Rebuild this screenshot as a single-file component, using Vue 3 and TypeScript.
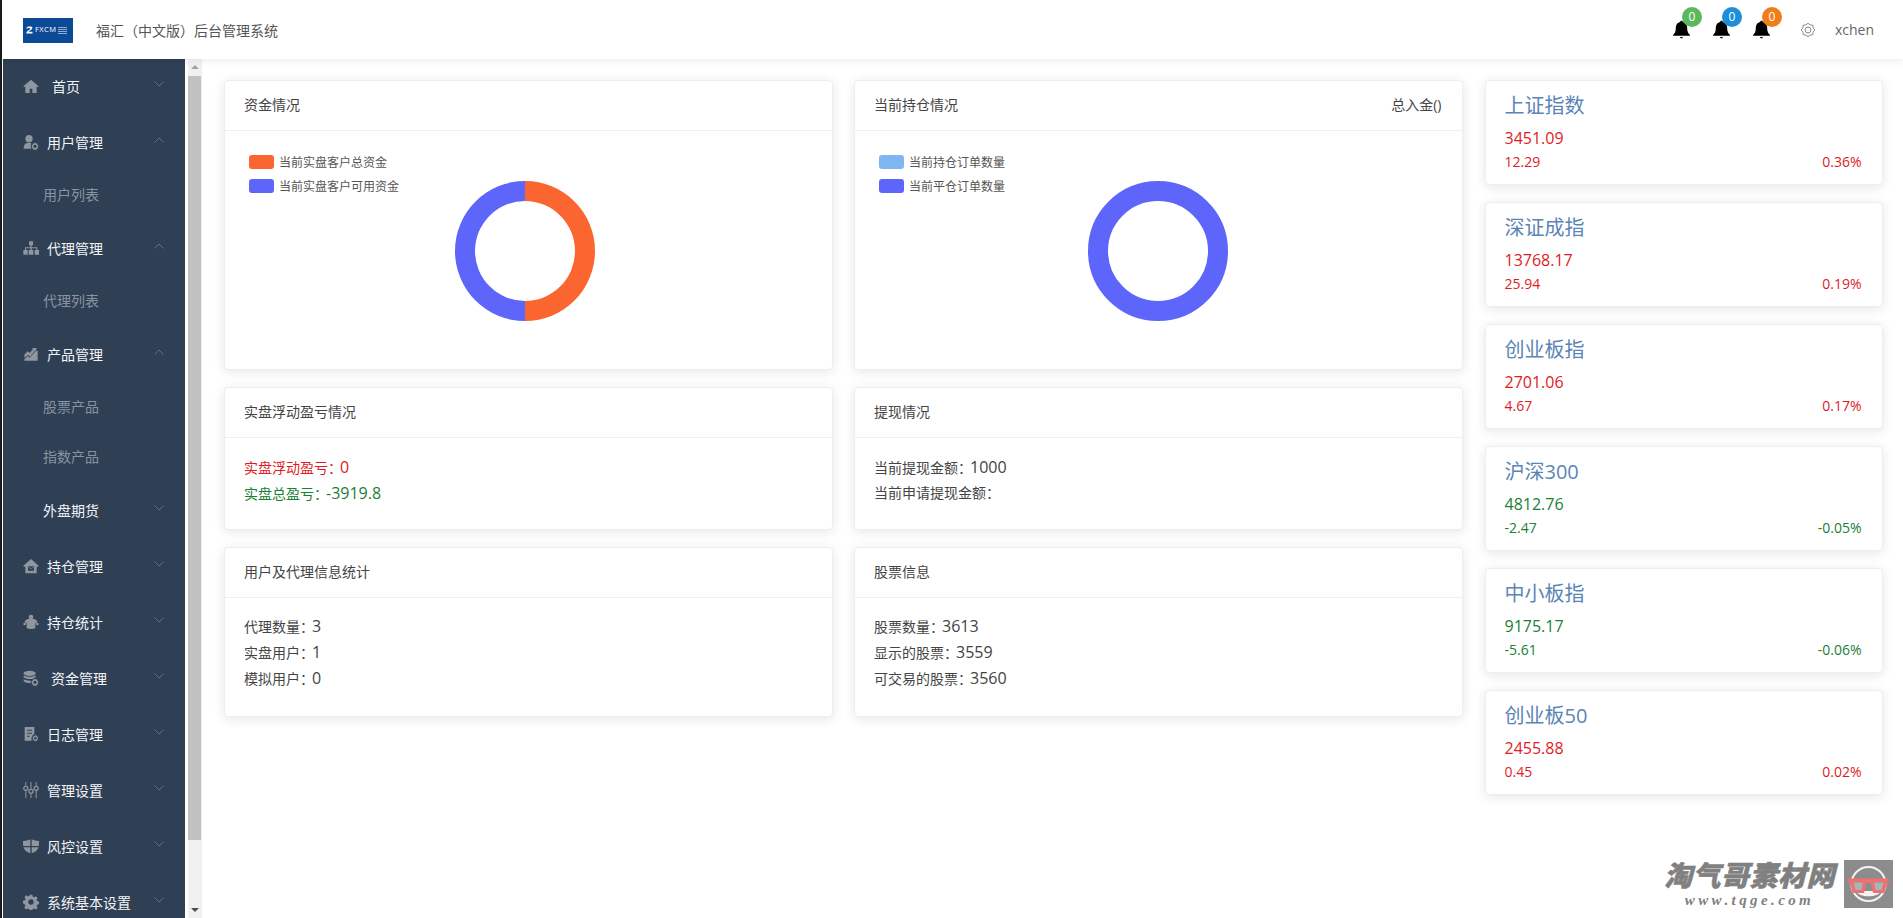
<template>
  <div class="page">
    <header class="topbar">
      <div class="logo">
        <svg class="logo-mark" viewBox="0 0 7 8" width="7" height="8">
          <path d="M.6 1.400C1.500.300 6.400-.200 6.400 2 6.400 3.600 3.600 4.300 2.500 5.800h4V7.600H.3C.3 4.800 4.200 3.800 4.200 2.500 4.200 1.700 1.800 2 .6 2.800z" fill="#fff" />
        </svg>
        <span class="logo-text">FXCM</span>
        <span class="logo-flag"></span>
      </div>
      <div class="app-title">福汇（中文版）后台管理系统</div>
      <div class="top-right">
        <div v-for="b in badges" :key="b" class="bell">
          <svg viewBox="1.500 1.200 17 17.600" width="17" height="19">
            <path d="M10 1.200c-.9 0-1.400.6-1.400 1.400C5.800 3.200 4.300 5.600 4.300 8.400c0 3.600-1 5.400-2.800 7v.9h17v-.9c-1.800-1.600-2.800-3.400-2.800-7 0-2.800-1.500-5.200-4.300-5.800 0-.8-.5-1.400-1.400-1.400zM8.600 17.400c0 .8.6 1.400 1.400 1.400s1.400-.6 1.400-1.400z" fill="#000" />
          </svg>
          <span class="badge" :style="{ background: b }">0</span>
        </div>
        <svg class="gear" viewBox="0 0 24 24" width="14" height="14" fill="none" stroke="#777" stroke-width="1.500">
          <polygon :points="gearPoints" stroke-linejoin="round" />
          <circle cx="12" cy="12" r="5" />
        </svg>
        <span class="username">xchen</span>
      </div>
    </header>

    <div class="body-row">
      <aside class="sidebar">
        <div v-for="item in menu" :key="item.label" class="menu-group">
          <div class="menu-item" :class="{ bare: !item.icon }">
            <span v-if="item.icon" class="menu-icon">
              <svg viewBox="0 0 24 24" fill="#8f96a0" v-html="icons[item.icon]"></svg>
            </span>
            <span class="menu-label" :style="{ marginLeft: item.shift ? item.shift + 'px' : undefined }">{{ item.label }}</span>
            <svg class="chev" viewBox="0 0 10 6" width="10" height="6" fill="none" stroke="#6f7c8b" stroke-width="0.8">
              <path v-if="item.open" d="M.5 5.500L5 1l4.500 4.500" />
              <path v-else d="M.5.500L5 5 9.500.500" />
            </svg>
          </div>
          <div v-for="sub in item.children" :key="sub" class="sub-item">{{ sub }}</div>
        </div>
      </aside>

      <div class="scrollgap"></div>
      <div class="scrollbar">
        <div class="arrow up"></div>
        <div class="thumb"></div>
        <div class="arrow down"></div>
      </div>

      <main class="content">
        <div class="col">
          <section class="card chart-card">
            <div class="card-head"><span>资金情况</span></div>
            <div class="chart-body">
              <ul class="legend">
                <li><i style="background: #fb6530"></i>当前实盘客户总资金</li>
                <li><i style="background: #5d65fb"></i>当前实盘客户可用资金</li>
              </ul>
              <svg class="donut" viewBox="0 0 140 140" width="140" height="140">
                <path d="M70 0a70 70 0 0 1 0 140v-20a50 50 0 0 0 0-100z" fill="#fb6530" />
                <path d="M70 0a70 70 0 0 0 0 140v-20a50 50 0 0 1 0-100z" fill="#5d65fb" />
              </svg>
            </div>
          </section>
          <section class="card float-card">
            <div class="card-head"><span>实盘浮动盈亏情况</span></div>
            <div class="stat-body">
              <p class="red">实盘浮动盈亏：<b>0</b></p>
              <p class="green">实盘总盈亏：<b>-3919.8</b></p>
            </div>
          </section>
          <section class="card info-card">
            <div class="card-head"><span>用户及代理信息统计</span></div>
            <div class="stat-body">
              <p>代理数量：<b>3</b></p>
              <p>实盘用户：<b>1</b></p>
              <p>模拟用户：<b>0</b></p>
            </div>
          </section>
        </div>

        <div class="col">
          <section class="card chart-card">
            <div class="card-head"><span>当前持仓情况</span><span>总入金()</span></div>
            <div class="chart-body">
              <ul class="legend">
                <li><i style="background: #7fb7f2"></i>当前持仓订单数量</li>
                <li><i style="background: #5d65fb"></i>当前平仓订单数量</li>
              </ul>
              <svg class="donut centered" viewBox="0 0 140 140" width="140" height="140">
                <circle cx="70" cy="70" r="60" fill="none" stroke="#5d65fb" stroke-width="20" />
              </svg>
            </div>
          </section>
          <section class="card float-card">
            <div class="card-head"><span>提现情况</span></div>
            <div class="stat-body">
              <p>当前提现金额：<b>1000</b></p>
              <p>当前申请提现金额：</p>
            </div>
          </section>
          <section class="card info-card">
            <div class="card-head"><span>股票信息</span></div>
            <div class="stat-body">
              <p>股票数量：<b>3613</b></p>
              <p>显示的股票：<b>3559</b></p>
              <p>可交易的股票：<b>3560</b></p>
            </div>
          </section>
        </div>

        <div class="col index-col">
          <section v-for="idx in indexes" :key="idx.name" class="card index-card">
            <div class="index-name">{{ idx.name }}</div>
            <div class="index-price" :class="idx.up ? 'red' : 'green'">{{ idx.price }}</div>
            <div class="index-row" :class="idx.up ? 'red' : 'green'">
              <span>{{ idx.diff }}</span><span>{{ idx.pct }}</span>
            </div>
          </section>
        </div>
      </main>
    </div>

    <div class="watermark">
      <div class="wm-text">
        <div class="wm-cn">淘气哥素材网</div>
        <div class="wm-en">www.tqge.com</div>
      </div>
      <div class="wm-logo">
        <svg viewBox="0 0 49 48" width="49" height="48">
          <circle cx="24.500" cy="24" r="17" fill="#8c8c8c" stroke="#f4f4f4" stroke-width="2" />
          <path d="M12 31c3 7 22 7 25 0z" fill="#f4f4f4" />
          <path d="M8.500 22.500h11.500l-1.200 9h-7.500zM29 22.500h11.500l-3 9H30z" fill="#a9b5b5" />
          <path fill-rule="evenodd" d="M4 18.500h41l.3 3.500-2.300.7-2.500 10.300H29L26.800 23h-4.600L20 33H8.500L6 22.700 3.700 22zM9.500 22l2 8h6l1.300-8zM30.200 22l1.300 8h6l2-8z" fill="#ef7070" />
        </svg>
      </div>
    </div>
  </div>
</template>

<script setup lang="ts">
interface MenuItem {
  label: string
  icon?: string
  open?: boolean
  shift?: number
  children?: string[]
}

interface IndexRow {
  name: string
  price: string
  diff: string
  pct: string
  up: boolean
}

const badges = ['#5cb85c', '#1d8fd8', '#f07d1a']

// small outlined cog in the top bar
const gearPoints = Array.from({ length: 16 }, (_, i) => {
  const a = (i / 16) * Math.PI * 2
  const r = i % 2 ? 9.5 : 11.5
  return `${(12 + r * Math.cos(a)).toFixed(2)},${(12 + r * Math.sin(a)).toFixed(2)}`
}).join(' ')

const menu: MenuItem[] = [
  { label: '首页', icon: 'home', shift: 5 },
  { label: '用户管理', icon: 'userGear', open: true, children: ['用户列表'] },
  { label: '代理管理', icon: 'sitemap', open: true, children: ['代理列表'] },
  { label: '产品管理', icon: 'chart', open: true, children: ['股票产品', '指数产品'] },
  { label: '外盘期货' },
  { label: '持仓管理', icon: 'houseMail' },
  { label: '持仓统计', icon: 'people' },
  { label: '资金管理', icon: 'database', shift: 4 },
  { label: '日志管理', icon: 'docGear' },
  { label: '管理设置', icon: 'sliders' },
  { label: '风控设置', icon: 'shield' },
  { label: '系统基本设置', icon: 'gear' }
]

// hand drawn menu glyphs, 24 box
const icons: Record<string, string> = {
  home: '<path d="M12 2.500L.5 12.500l1.200 1.200L3.500 12.300V22.500h6.500v-6.500h4v6.500h6.500V12.300l1.800 1.400 1.200-1.200z"/>',
  userGear:
    '<circle cx="9" cy="7" r="5.500"/><path d="M1 22c0-6 2.500-9 8-9 1.500 0 2.600.3 3.500.8-.9 1.500-1.300 5-.2 8.200z"/><path fill-rule="evenodd" d="M18 12.500l1.100 1.700 2-.2.400 2 1.700 1-.8 1.700.8 1.700-1.700 1-.4 2-2-.2-1.100 1.700-1.100-1.700-2 .2-.4-2-1.700-1 .8-1.700-.8-1.700 1.700-1 .4-2 2 .2zm0 3.500a2.500 2.500 0 100 5 2.500 2.500 0 000-5z"/>',
  sitemap:
    '<path d="M9 2h6v6h-2v3h8.500v4h2.500v7h-6.500v-7h2.500v-2.500H13V15h2.500v7h-7v-7H11v-2.500H4.500V15H7v7H.5v-7H3v-4h8V8H9z"/>',
  chart:
    '<path d="M2 13l5-5 3 2.500 5-6-1.500-1.500H20v5l-1.500-1.500-8 9.500-3-2.500L2 17.500zM2 20l5-5 3 2.500 9-10h3v14.500H2z"/>',
  houseMail:
    '<path fill-rule="evenodd" d="M12 1.500L.5 11.500l.8 1.500H3.500V23h17V13h2.200l.8-1.500zM7.500 12.500h9v6.500h-9zm.8.700v.9L12 16.500l3.700-2.400v-.9L12 15.600z"/>',
  people:
    '<circle cx="12" cy="4.500" r="3.500"/><circle cx="2.500" cy="15" r="2"/><circle cx="21.500" cy="15" r="2"/><path d="M4.500 8.500c3.500-1.700 11.500-1.700 15 0l2.500 3.500-3.500 2V21.500c-3.500 1.500-9.500 1.500-13 0V14L2 12z"/>',
  database:
    '<ellipse cx="10" cy="5" rx="9" ry="4"/><path d="M1 7.500c1.500 3.500 16.500 3.500 18 0V11c-1 .5-3 1-4.500 2.500-4.500.5-11 0-13.500-2.500zM1 13.500c1.500 1.800 7 2.800 11 2.500-.3 1-.3 2.500 0 3.500-4 .3-10-.5-11-3z"/><path fill-rule="evenodd" d="M18 12.500l1.100 1.700 2-.2.400 2 1.700 1-.8 1.700.8 1.700-1.700 1-.4 2-2-.2-1.100 1.700-1.100-1.700-2 .2-.4-2-1.700-1 .8-1.700-.8-1.700 1.700-1 .4-2 2 .2zm0 3.500a2.500 2.500 0 100 5 2.500 2.500 0 000-5z"/>',
  docGear:
    '<path fill-rule="evenodd" d="M2.500 1.500h14.500v11c-2.500.500-5 4-4 9.500H2.500zM6 5.500v1.800h7.500V5.500zM6 10v1.800h7.500V10zM6 14.500v1.800h4v-1.800z"/><path fill-rule="evenodd" d="M18.500 13.500l.9 1.300 1.600-.2.300 1.500 1.400.9-.7 1.400.7 1.400-1.400.9-.3 1.500-1.600-.2-.9 1.300-.9-1.300-1.600.2-.3-1.500-1.400-.9.7-1.400-.7-1.400 1.400-.9.300-1.500 1.600.2zm0 2.900a2 2 0 100 4 2 2 0 000-4z"/>',
  sliders:
    '<path d="M3.500 0h1.500v5.500h-1.500zM3.500 13h1.500v11h-1.500zM11.200 0h1.500v10h-1.500zM11.200 18h1.500v6h-1.500zM19 0h1.500v5.500H19zM19 13h1.500v11H19z"/><path fill-rule="evenodd" d="M4.250 5.500a4 4 0 110 8 4 4 0 010-8zm0 1.900a2.100 2.100 0 100 4.200 2.100 2.100 0 000-4.200zM12 10a4 4 0 110 8 4 4 0 010-8zm0 1.900a2.100 2.100 0 100 4.200 2.100 2.100 0 000-4.200zM19.750 5.500a4 4 0 110 8 4 4 0 010-8zm0 1.900a2.100 2.100 0 100 4.200 2.100 2.100 0 000-4.200z"/>',
  shield:
    '<path d="M11 2C8 3.500 4 4.500 0 4.500c0 2.500 0 5 .3 7.500H11zM13 2c3 1.500 7 2.500 11 2.500 0 2.500 0 5-.3 7.500H13zM.6 14H11v9C6 21.500 1.800 18.500.6 14zM13 14h10.400C22.200 18.500 18 21.500 13 23z"/>',
  gear:
    '<path fill-rule="evenodd" d="M10 1h4l.7 3.200 1.800.8 2.800-1.800 2.800 2.800-1.800 2.800.8 1.800 3.200.7v4l-3.200.7-.8 1.800 1.800 2.800-2.800 2.800-2.800-1.800-1.800.8-.7 3.200h-4l-.7-3.200-1.800-.8-2.800 1.800-2.800-2.800 1.800-2.800-.8-1.800L0 14v-4l3.200-.7.8-1.800-1.800-2.800L5 1.900l2.800 1.800 1.800-.8zM12 8a4 4 0 100 8 4 4 0 000-8z"/>'
}

const indexes: IndexRow[] = [
  { name: '上证指数', price: '3451.09', diff: '12.29', pct: '0.36%', up: true },
  { name: '深证成指', price: '13768.17', diff: '25.94', pct: '0.19%', up: true },
  { name: '创业板指', price: '2701.06', diff: '4.67', pct: '0.17%', up: true },
  { name: '沪深300', price: '4812.76', diff: '-2.47', pct: '-0.05%', up: false },
  { name: '中小板指', price: '9175.17', diff: '-5.61', pct: '-0.06%', up: false },
  { name: '创业板50', price: '2455.88', diff: '0.45', pct: '0.02%', up: true }
]
</script>

<style>
html,
body {
  margin: 0;
  height: 100%;
  overflow: hidden;
  background: #fff;
}
</style>

<style scoped>
.page {
  position: relative;
  width: 1903px;
  height: 918px;
  overflow: hidden;
  box-sizing: border-box;
  border-left: 2px solid #1a1a1a;
  background: #fff;
  font-family: "Open Sans", "Noto Sans CJK SC", sans-serif;
  font-size: 14px;
  color: #444;
}

/* top bar */
.topbar {
  position: relative;
  z-index: 2;
  height: 59px;
  display: flex;
  align-items: center;
  padding: 0 29px 0 21px;
  background: #fff;
  box-shadow: 0 2px 8px rgba(0, 0, 0, 0.07);
}

.logo {
  width: 50px;
  height: 25px;
  display: flex;
  align-items: center;
  padding-left: 3px;
  box-sizing: border-box;
  background: #0d4a96;
  color: #fff;
  margin-top: 1px;
}

.logo-text {
  margin-left: 2px;
  font-size: 7.500px;
  line-height: 1;
  letter-spacing: 0.400px;
}

.logo-flag {
  width: 9px;
  height: 8px;
  margin-left: 2px;
  background: repeating-linear-gradient(0deg, #8fb0d8 0 1px, #0d4a96 1px 2px);
}

.app-title {
  margin-left: 23px;
  color: #555;
}

.top-right {
  margin-left: auto;
  display: flex;
  align-items: center;
}

.bell {
  position: relative;
  width: 17px;
  height: 19px;
  margin-right: 23px;
}

.bell svg {
  display: block;
}

.badge {
  position: absolute;
  top: -13px;
  left: 9px;
  width: 20px;
  height: 20px;
  border-radius: 50%;
  color: #fff;
  font-size: 12px;
  line-height: 20px;
  text-align: center;
}

.gear {
  margin-left: 8px;
}

.username {
  margin-left: 20px;
  color: #666;
}

.body-row {
  display: flex;
  height: 859px;
}

/* sidebar */
.sidebar {
  width: 182px;
  margin-left: 1px;
  flex: none;
  overflow: hidden;
  background: #2f3f54;
}

.menu-group:first-child {
  margin-top: -1px;
}

.menu-item {
  height: 56px;
  display: flex;
  align-items: center;
  padding-left: 20px;
  color: #f2f4f6;
  position: relative;
}

.menu-item.bare {
  padding-left: 40px;
}

.menu-icon {
  width: 16px;
  height: 16px;
  margin-right: 8px;
  display: flex;
  align-items: center;
  justify-content: center;
}

.menu-icon svg {
  width: 16px;
  height: 16px;
  flex: none;
}

.chev {
  position: absolute;
  left: 151px;
  top: 23px;
}

.sub-item {
  height: 50px;
  line-height: 50px;
  padding-left: 40px;
  color: #8a94a0;
}

/* fake window scrollbar */
.scrollgap {
  width: 3px;
  flex: none;
  background: #fff;
}

.scrollbar {
  width: 14px;
  flex: none;
  display: flex;
  flex-direction: column;
  background: #f1f1f1;
}

.arrow {
  height: 17px;
  flex: none;
  position: relative;
}

.arrow::after {
  content: "";
  position: absolute;
  left: 3px;
  top: 6px;
  border-left: 4px solid transparent;
  border-right: 4px solid transparent;
}

.arrow.up::after {
  border-bottom: 4px solid #a3a3a3;
}

.arrow.down {
  margin-top: auto;
}

.arrow.down::after {
  top: 7px;
  border-top: 4px solid #505050;
}

.thumb {
  height: 764px;
  width: 13px;
  background: #c1c1c1;
}

/* main */
.content {
  flex: 1;
  display: flex;
  align-items: flex-start;
  gap: 21px;
  padding: 21px 20px 0 21.500px;
  min-width: 0;
}

.col {
  display: flex;
  flex-direction: column;
  gap: 17px;
  width: 609px;
  flex: none;
}

.index-col {
  width: 398px;
  margin-left: 1px;
}

.card {
  box-sizing: border-box;
  background: #fff;
  border: 1px solid #ebeef5;
  border-radius: 4px;
  box-shadow: 0 2px 12px rgba(0, 0, 0, 0.1);
}

.card-head {
  box-sizing: border-box;
  height: 50px;
  display: flex;
  justify-content: space-between;
  align-items: center;
  padding: 0 20px 3px 19.500px;
  border-bottom: 1px solid #ebeef5;
  color: #444;
}

.chart-card {
  height: 290px;
}

.float-card {
  height: 143px;
}

.info-card {
  height: 170px;
}

.chart-body {
  position: relative;
  height: 238px;
}

.legend {
  list-style: none;
  margin: 0;
  padding: 19px 0 0 24.500px;
  font-size: 12px;
  color: #555;
}

.legend li {
  height: 24px;
  display: flex;
  align-items: center;
}

.legend i {
  width: 25px;
  height: 14px;
  border-radius: 3px;
  margin-right: 5px;
}

.donut {
  position: absolute;
  left: 230.500px;
  top: 50px;
}

.donut.centered {
  left: 233px;
}

.stat-body {
  padding: 15px 19px 0 19.500px;
}

.float-card .stat-body {
  padding-top: 16px;
}

.stat-body p {
  margin: 0;
  height: 26px;
  line-height: 26px;
}

.stat-body b {
  font-weight: 400;
  font-size: 16px;
  margin-left: -2px;
}

.red {
  color: #e01b24;
}

.green {
  color: #1a8035;
}

/* index cards */
.index-card {
  height: 105px;
  padding: 10px 20px 0 19px;
}

.index-name {
  font-size: 20px;
  line-height: 30px;
  color: #5b85b5;
}

.index-price {
  font-size: 16px;
  line-height: 24px;
  margin-top: 5px;
}

.index-row {
  display: flex;
  justify-content: space-between;
  line-height: 23px;
}

/* watermark, sits over the page corner */
.watermark {
  position: absolute;
  right: 10px;
  bottom: 10px;
  display: flex;
  align-items: center;
  gap: 9px;
  color: #808080;
}

.wm-text {
  text-align: center;
}

.wm-cn {
  font-size: 28px;
  line-height: 28px;
  font-weight: 900;
  font-style: italic;
  letter-spacing: 0.500px;
  -webkit-text-stroke: 0.500px #808080;
}

.wm-en {
  margin-top: 3px;
  font-family: "Liberation Serif", serif;
  font-size: 15px;
  line-height: 16px;
  font-weight: 700;
  font-style: italic;
  letter-spacing: 3.400px;
}

.wm-logo {
  width: 49px;
  height: 48px;
  background: #8c8c8c;
}

.wm-logo svg {
  display: block;
}
</style>
